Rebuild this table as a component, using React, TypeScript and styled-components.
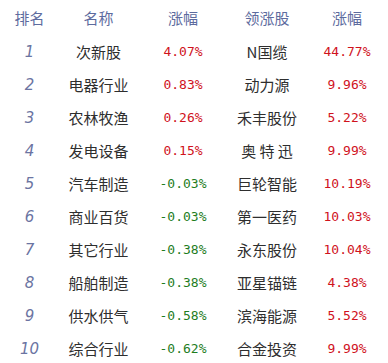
import { Fragment } from "react";
import styled, { createGlobalStyle } from "styled-components";

type Row = {
  rank: number;
  name: string;
  change: string;
  leader: string;
  leaderChange: string;
};

const rows: Row[] = [
  { rank: 1, name: "次新股", change: "4.07%", leader: "N国缆", leaderChange: "44.77%" },
  { rank: 2, name: "电器行业", change: "0.83%", leader: "动力源", leaderChange: "9.96%" },
  { rank: 3, name: "农林牧渔", change: "0.26%", leader: "禾丰股份", leaderChange: "5.22%" },
  { rank: 4, name: "发电设备", change: "0.15%", leader: "奥 特 迅", leaderChange: "9.99%" },
  { rank: 5, name: "汽车制造", change: "-0.03%", leader: "巨轮智能", leaderChange: "10.19%" },
  { rank: 6, name: "商业百货", change: "-0.03%", leader: "第一医药", leaderChange: "10.03%" },
  { rank: 7, name: "其它行业", change: "-0.38%", leader: "永东股份", leaderChange: "10.04%" },
  { rank: 8, name: "船舶制造", change: "-0.38%", leader: "亚星锚链", leaderChange: "4.38%" },
  { rank: 9, name: "供水供气", change: "-0.58%", leader: "滨海能源", leaderChange: "5.52%" },
  { rank: 10, name: "综合行业", change: "-0.62%", leader: "合金投资", leaderChange: "9.99%" },
];

const GlobalStyle = createGlobalStyle`
  html, body {
    margin: 0;
    padding: 0;
    background: #ffffff;
  }
`;

const Table = styled.div`
  width: 388px;
  display: grid;
  grid-template-columns: 59px 79px 90px 78px 82px;
  font-family: "Noto Sans CJK SC", sans-serif;
`;

const HeadCell = styled.div`
  height: 35px;
  display: flex;
  align-items: center;
  justify-content: center;
  font-size: 15px;
  color: #5d6b9e;
`;

const Cell = styled.div`
  height: 33px;
  display: flex;
  align-items: center;
  justify-content: center;
  font-size: 15px;
  color: #2e2e2e;
`;

const Rank = styled(Cell)`
  font-family: "DejaVu Sans", sans-serif;
  font-style: italic;
  font-size: 15px;
  color: #6b74a2;
`;

const Percent = styled(Cell)<{ $down: boolean }>`
  font-family: "DejaVu Sans Mono", "Noto Sans CJK SC", monospace;
  font-size: 13px;
  color: ${(p) => (p.$down ? "#1f7d1f" : "#d0121d")};
`;

export default function App() {
  return (
    <>
      <GlobalStyle />
      <Table>
        <HeadCell>排名</HeadCell>
        <HeadCell>名称</HeadCell>
        <HeadCell>涨幅</HeadCell>
        <HeadCell>领涨股</HeadCell>
        <HeadCell>涨幅</HeadCell>
        {rows.map((r) => (
          <Fragment key={r.rank}>
            <Rank>{r.rank}</Rank>
            <Cell>{r.name}</Cell>
            <Percent $down={r.change.startsWith("-")}>{r.change}</Percent>
            <Cell>{r.leader}</Cell>
            <Percent $down={r.leaderChange.startsWith("-")}>{r.leaderChange}</Percent>
          </Fragment>
        ))}
      </Table>
    </>
  );
}
